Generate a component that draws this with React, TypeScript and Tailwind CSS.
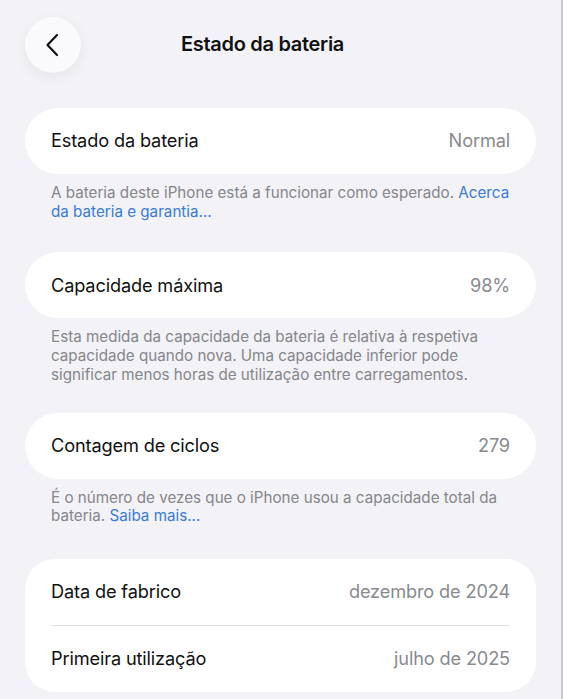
import React from 'react';

const font = { fontFamily: 'Inter, "Noto Sans", sans-serif' };

const Row: React.FC<{ label: string; value: string }> = ({ label, value }) => (
  <div className="flex h-[66px] items-center justify-between px-[26px]">
    <span className="text-[18.2px] tracking-[-0.15px] text-[#111]">{label}</span>
    <span className="text-[18.2px] tracking-[-0.15px] text-[#8a8a8e]">{value}</span>
  </div>
);

const Note: React.FC<{ children: React.ReactNode }> = ({ children }) => (
  <p className="pl-[26px] pr-[20px] pt-[10px] text-[15.2px] leading-[18.7px] text-[#86868b]">{children}</p>
);

const Link: React.FC<{ children: React.ReactNode }> = ({ children }) => (
  <span className="text-[#3a7bd5]">{children}</span>
);

export default function App() {
  return (
    <div className="flex min-h-[699px] w-[563px] bg-[#f2f2f7]" style={font}>
      <div className="flex-1 border-r-2 border-[#c9c9ce]">
        <header className="relative flex h-[88px] items-center justify-center pr-[36px]">
          <button className="absolute left-[25px] top-[17px] flex h-[56px] w-[56px] items-center justify-center rounded-full bg-[#fafafc] shadow-[0_4px_14px_rgba(0,0,0,0.06)]">
            <svg width="16" height="24" viewBox="0 0 16 24" fill="none">
              <path d="M12 2 2.5 12 12 22" stroke="#111" strokeWidth="2.2" strokeLinecap="round" strokeLinejoin="round" />
            </svg>
          </button>
          <h1 className="text-[20px] font-semibold tracking-[-0.3px] text-[#111]">Estado da bateria</h1>
        </header>

        <div className="px-[25px] pt-[20px]">
          <div className="rounded-full bg-white">
            <Row label="Estado da bateria" value="Normal" />
          </div>
          <Note>
            A bateria deste iPhone está a funcionar como esperado. <Link>Acerca da bateria e garantia...</Link>
          </Note>

          <div className="mt-[31px] rounded-full bg-white">
            <Row label="Capacidade máxima" value="98%" />
          </div>
          <Note>
            Esta medida da capacidade da bateria é relativa à respetiva capacidade quando nova. Uma capacidade inferior pode significar menos horas de utilização entre carregamentos.
          </Note>

          <div className="mt-[28px] rounded-full bg-white">
            <Row label="Contagem de ciclos" value="279" />
          </div>
          <Note>
            É o número de vezes que o iPhone usou a capacidade total da bateria. <Link>Saiba mais...</Link>
          </Note>

          <div className="mt-[33px] rounded-[30px] bg-white">
            <Row label="Data de fabrico" value="dezembro de 2024" />
            <div className="mx-[26px] h-px bg-[#e3e3e6]" />
            <Row label="Primeira utilização" value="julho de 2025" />
          </div>
        </div>
      </div>
    </div>
  );
}
